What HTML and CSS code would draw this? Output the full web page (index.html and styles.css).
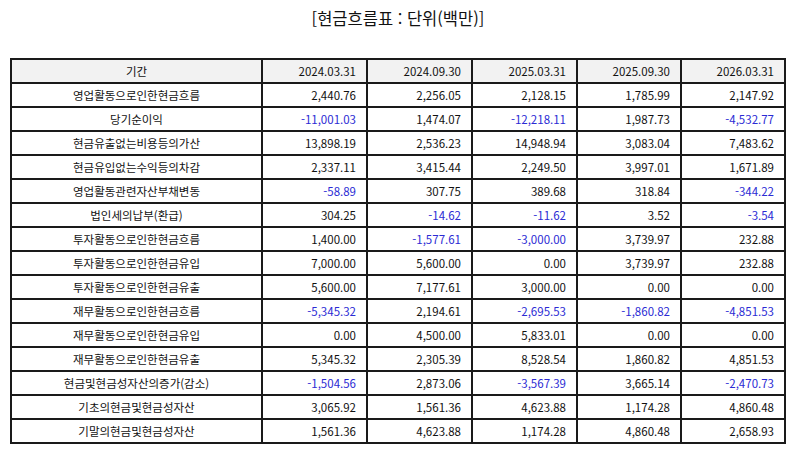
FILE: index.html
```html
<!DOCTYPE html>
<html lang="ko">
<head>
<meta charset="utf-8">
<link rel="stylesheet" href="styles.css">
</head>
<body>
<div class="page">
  <div class="title">[현금흐름표 : 단위(백만)]</div>
  <table class="cf">
    <colgroup>
      <col class="c-label"><col class="c-a"><col class="c-a"><col class="c-a"><col class="c-b"><col class="c-b">
    </colgroup>
    <thead>
      <tr><th class="label">기간</th><th>2024.03.31</th><th>2024.09.30</th><th>2025.03.31</th><th>2025.09.30</th><th>2026.03.31</th></tr>
    </thead>
    <tbody>
      <tr><td class="label">영업활동으로인한현금흐름</td><td>2,440.76</td><td>2,256.05</td><td>2,128.15</td><td>1,785.99</td><td>2,147.92</td></tr>
      <tr><td class="label">당기순이익</td><td class="neg">-11,001.03</td><td>1,474.07</td><td class="neg">-12,218.11</td><td>1,987.73</td><td class="neg">-4,532.77</td></tr>
      <tr><td class="label">현금유출없는비용등의가산</td><td>13,898.19</td><td>2,536.23</td><td>14,948.94</td><td>3,083.04</td><td>7,483.62</td></tr>
      <tr><td class="label">현금유입없는수익등의차감</td><td>2,337.11</td><td>3,415.44</td><td>2,249.50</td><td>3,997.01</td><td>1,671.89</td></tr>
      <tr><td class="label">영업활동관련자산부채변동</td><td class="neg">-58.89</td><td>307.75</td><td>389.68</td><td>318.84</td><td class="neg">-344.22</td></tr>
      <tr><td class="label">법인세의납부(환급)</td><td>304.25</td><td class="neg">-14.62</td><td class="neg">-11.62</td><td>3.52</td><td class="neg">-3.54</td></tr>
      <tr><td class="label">투자활동으로인한현금흐름</td><td>1,400.00</td><td class="neg">-1,577.61</td><td class="neg">-3,000.00</td><td>3,739.97</td><td>232.88</td></tr>
      <tr><td class="label">투자활동으로인한현금유입</td><td>7,000.00</td><td>5,600.00</td><td>0.00</td><td>3,739.97</td><td>232.88</td></tr>
      <tr><td class="label">투자활동으로인한현금유출</td><td>5,600.00</td><td>7,177.61</td><td>3,000.00</td><td>0.00</td><td>0.00</td></tr>
      <tr><td class="label">재무활동으로인한현금흐름</td><td class="neg">-5,345.32</td><td>2,194.61</td><td class="neg">-2,695.53</td><td class="neg">-1,860.82</td><td class="neg">-4,851.53</td></tr>
      <tr><td class="label">재무활동으로인한현금유입</td><td>0.00</td><td>4,500.00</td><td>5,833.01</td><td>0.00</td><td>0.00</td></tr>
      <tr><td class="label">재무활동으로인한현금유출</td><td>5,345.32</td><td>2,305.39</td><td>8,528.54</td><td>1,860.82</td><td>4,851.53</td></tr>
      <tr><td class="label">현금및현금성자산의증가(감소)</td><td class="neg">-1,504.56</td><td>2,873.06</td><td class="neg">-3,567.39</td><td>3,665.14</td><td class="neg">-2,470.73</td></tr>
      <tr><td class="label">기초의현금및현금성자산</td><td>3,065.92</td><td>1,561.36</td><td>4,623.88</td><td>1,174.28</td><td>4,860.48</td></tr>
      <tr><td class="label">기말의현금및현금성자산</td><td>1,561.36</td><td>4,623.88</td><td>1,174.28</td><td>4,860.48</td><td>2,658.93</td></tr>
    </tbody>
  </table>
</div>
</body>
</html>
```
FILE: styles.css
```css
html, body {
  margin: 0;
  padding: 0;
  background: #ffffff;
}
body {
  font-family: "Noto Sans CJK KR", "Noto Sans", sans-serif;
  color: #111111;
}
.page {
  padding: 0 8px 0 10px;
}
.title {
  text-align: center;
  font-size: 16.5px;
  line-height: 22px;
  padding-top: 7px;
  height: 58px;
  box-sizing: border-box;
  color: #111111;
}
.cf {
  width: 776px;
  border-collapse: separate;
  border-spacing: 0;
  table-layout: fixed;
  font-size: 11.5px;
  border-left: 2px solid #1a1a1a;
  border-top: 2px solid #1a1a1a;
}
.c-label { width: 251px; }
.c-a { width: 105px; }
.c-b { width: 104px; }
.cf th, .cf td {
  border-right: 2px solid #1a1a1a;
  border-bottom: 2px solid #1a1a1a;
  height: 24px;
  box-sizing: border-box;
  padding: 0 10px 0 4px;
  text-align: right;
  font-weight: normal;
  white-space: nowrap;
  line-height: 12px;
}
.cf th {
  background: #f2f2f2;
}
.cf .label {
  text-align: center;
  padding: 0;
}
.cf .neg {
  color: #2b2bd4;
}
```
